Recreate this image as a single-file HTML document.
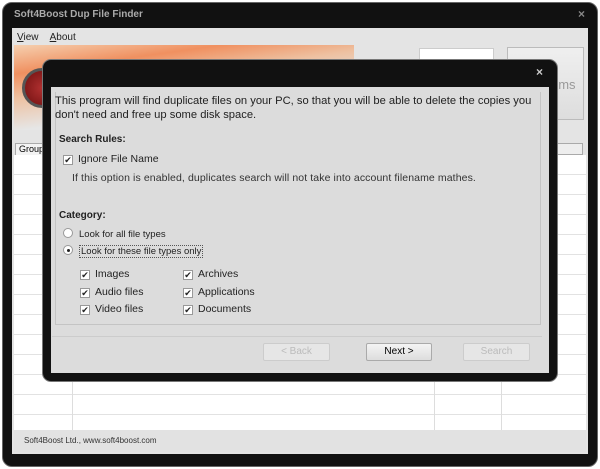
<!DOCTYPE html>
<html><head><meta charset="utf-8"><style>
*{margin:0;padding:0;box-sizing:border-box}
body{width:600px;height:469px;background:#fff;font-family:"Liberation Sans",sans-serif;position:relative;overflow:hidden}
.abs{position:absolute}
.win{left:2px;top:2px;width:596px;height:465px;background:#111;border-radius:10px;border:1px solid #666}
.title{left:14px;top:9px;color:#aaa;font-size:10px;font-weight:bold}
.client{left:12px;top:28px;width:576px;height:426px;background:#e4e4e4}
.grid{left:14px;top:155px;width:572px;height:275px;background:#fff;
 background-image:repeating-linear-gradient(to bottom,transparent 0,transparent 19px,#e2e2e2 19px,#e2e2e2 20px)}
.vl{top:155px;width:1px;height:275px;background:#ddd}
.cb{display:inline-block;width:10px;height:10px;border:1px solid #999;background:#fff;font-size:9px;line-height:8px;text-align:center;vertical-align:-1px;margin-right:5px}
.rb{display:inline-block;width:10px;height:10px;border:1px solid #999;border-radius:50%;background:#fff;vertical-align:-1px;margin-right:6px;position:relative}
.btn{height:18px;border:1px solid #aaa;border-radius:2px;background:linear-gradient(#f4f4f4,#ddd);font-size:10px;text-align:center;line-height:16px}
.dis{color:#bbb;border-color:#ccc;background:#e6e6e6}
</style></head><body>
<div class="abs win"></div>
<div class="abs title">Soft4Boost Dup File Finder</div>
<div class="abs" style="left:578px;top:7px;color:#888;font-size:12px;font-weight:bold">×</div>
<div class="abs client"></div>
<div class="abs" style="left:17px;top:32px;font-size:10px;color:#222"><u>V</u>iew&nbsp;&nbsp;&nbsp;&nbsp;<u>A</u>bout</div>
<div class="abs" style="left:14px;top:45px;width:340px;height:85px;background:linear-gradient(172deg,#f5d0b0 0%,#f09060 22%,#eec0a0 40%,#e6e6e6 65%)"></div>
<div class="abs" style="left:22px;top:68px;width:40px;height:40px;border-radius:50%;background:radial-gradient(#b03030,#701010);border:3px solid #555"></div>
<div class="abs" style="left:419px;top:48px;width:75px;height:14px;background:#fff;border:1px solid #ccc"></div>
<div class="abs" style="left:507px;top:47px;width:77px;height:73px;border:1px solid #bbb;background:linear-gradient(#efefef,#ddd);font-size:13px;color:#999;padding:29px 0 0 43px">ems</div>
<div class="abs" style="left:15px;top:143px;width:40px;height:13px;border:1px solid #aaa;background:#f3f3f3;font-size:9px;padding-left:3px;line-height:11px">Group</div>
<div class="abs" style="left:505px;top:143px;width:78px;height:12px;border:1px solid #aaa;background:#eee"></div>
<div class="abs grid"></div>
<div class="abs vl" style="left:72px"></div><div class="abs vl" style="left:434px"></div><div class="abs vl" style="left:501px"></div>
<div class="abs" style="left:14px;top:430px;width:572px;height:22px;background:#e2e2e2;font-size:8px;color:#333;padding:6px 0 0 10px">Soft4Boost Ltd., www.soft4boost.com</div>

<div class="abs" style="left:42px;top:59px;width:516px;height:323px;background:#111;border-radius:9px;border:1px solid #777"></div>
<div class="abs" style="left:536px;top:65px;color:#ccc;font-size:12px;font-weight:bold">×</div>
<div class="abs" style="left:51px;top:87px;width:498px;height:286px;background:#dcdcdc"></div>
<div class="abs" style="left:55px;top:92px;width:486px;height:233px;border:1px solid #c4c4c4;border-top:none"></div>
<div class="abs" style="left:55px;top:94px;font-size:11.2px;color:#222;line-height:14px;white-space:nowrap">This program will find duplicate files on your PC, so that you will be able to delete the copies you<br>don't need and free up some disk space.</div>
<div class="abs" style="left:59px;top:134px;font-size:10px;font-weight:bold;color:#222">Search Rules:</div>
<div class="abs" style="left:63px;top:153px;font-size:10.5px;color:#222"><span class="cb">✔</span>Ignore File Name</div>
<div class="abs" style="left:72px;top:172px;font-size:10.5px;color:#333;letter-spacing:0.1px">If this option is enabled, duplicates search will not take into account filename mathes.</div>
<div class="abs" style="left:59px;top:210px;font-size:10px;font-weight:bold;color:#222">Category:</div>
<div class="abs" style="left:63px;top:228px;font-size:9.5px;color:#222"><span class="rb"></span>Look for all file types</div>
<div class="abs" style="left:63px;top:245px;font-size:9.5px;color:#222"><span class="rb"><span style="position:absolute;left:3px;top:3px;width:3px;height:3px;background:#222;border-radius:50%"></span></span><span style="border:1px dotted #555;padding:0 1px">Look for these file types only</span></div>
<div class="abs" style="left:80px;top:266px;font-size:10.5px;color:#222;line-height:17.5px"><span class="cb">✔</span>Images<br><span class="cb">✔</span>Audio files<br><span class="cb">✔</span>Video files</div>
<div class="abs" style="left:183px;top:266px;font-size:10.5px;color:#222;line-height:17.5px"><span class="cb">✔</span>Archives<br><span class="cb">✔</span>Applications<br><span class="cb">✔</span>Documents</div>
<div class="abs" style="left:52px;top:336px;width:490px;height:1px;background:#ccc"></div>
<div class="abs btn dis" style="left:263px;top:343px;width:67px">&lt; Back</div>
<div class="abs btn" style="left:366px;top:343px;width:66px">Next &gt;</div>
<div class="abs btn dis" style="left:463px;top:343px;width:67px">Search</div>
</body></html>
